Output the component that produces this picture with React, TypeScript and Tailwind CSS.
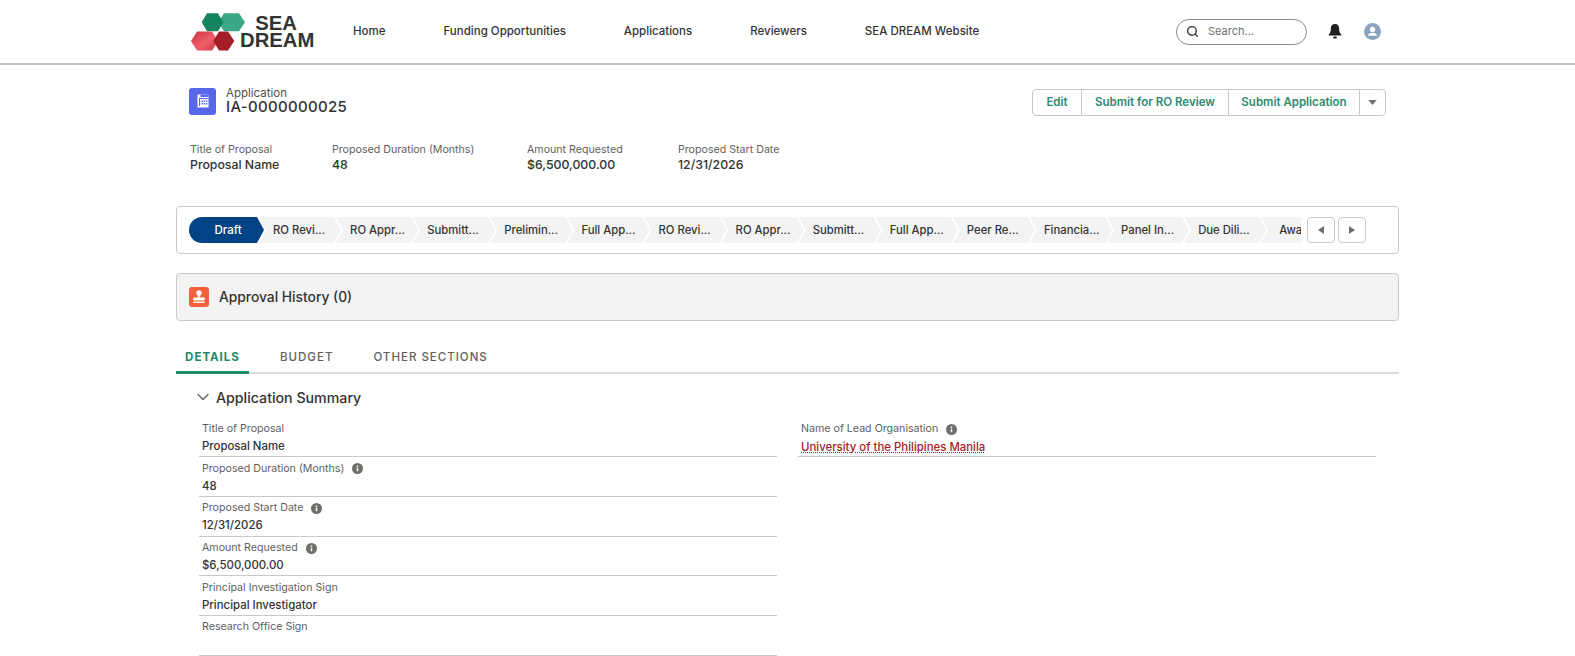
import React from 'react';
import { Search, ChevronDown } from 'lucide-react';

const navLinks = ['Home', 'Funding Opportunities', 'Applications', 'Reviewers', 'SEA DREAM Website'];

const highlights = [
  { label: 'Title of Proposal', value: 'Proposal Name', width: 'w-[142px]' },
  { label: 'Proposed Duration (Months)', value: '48', width: 'w-[195px]' },
  { label: 'Amount Requested', value: '$6,500,000.00', width: 'w-[151px]' },
  { label: 'Proposed Start Date', value: '12/31/2026', width: 'w-[150px]' },
];

const steps = [
  'RO Revi...',
  'RO Appr...',
  'Submitt...',
  'Prelimin...',
  'Full App...',
  'RO Revi...',
  'RO Appr...',
  'Submitt...',
  'Full App...',
  'Peer Re...',
  'Financia...',
  'Panel In...',
  'Due Dili...',
];

const summaryLeft = [
  { label: 'Title of Proposal', value: 'Proposal Name', info: false },
  { label: 'Proposed Duration (Months)', value: '48', info: true },
  { label: 'Proposed Start Date', value: '12/31/2026', info: true },
  { label: 'Amount Requested', value: '$6,500,000.00', info: true },
  { label: 'Principal Investigation Sign', value: 'Principal Investigator', info: false },
  { label: 'Research Office Sign', value: '', info: false },
];

const InfoDot = () => (
  <svg viewBox="0 0 12 12" className="ml-2 h-[11px] w-[11px] flex-none">
    <circle cx="6" cy="6" r="6" fill="#706e6b" />
    <rect x="5.2" y="5.2" width="1.6" height="3.8" fill="#fff" />
    <rect x="5.2" y="2.8" width="1.6" height="1.6" fill="#fff" />
  </svg>
);

const Logo = () => (
  <div className="relative h-[40px] w-[124px] flex-none">
    <svg viewBox="0 0 56 40" className="h-[40px] w-[56px]">
      <defs>
        <linearGradient id="redLeft" x1="0" y1="0" x2="1" y2="1">
          <stop offset="0" stopColor="#c9303c" />
          <stop offset="0.55" stopColor="#f0606a" />
          <stop offset="1" stopColor="#c8323c" />
        </linearGradient>
      </defs>
      <polygon points="34,1.2 49,1.2 55,10.2 49,19.200 34,19.200 28.300,10.200" fill="#3aa886" />
      <polygon points="17,1.200 28,1.200 33.300,10.200 28,19.200 17,19.200 11.700,10.200" fill="#14845f" />
      <polygon points="7,19.500 22,19.500 28.300,29 22,38.500 7,38.500 1,29" fill="url(#redLeft)" />
      <polygon points="29,19.500 38,19.500 44.300,29 38,38.500 29,38.500 23.300,29" fill="#a51d26" />
    </svg>
    <div className="absolute left-[50px] top-[3px] w-[74px] text-center font-['Liberation_Sans',sans-serif] text-[20.300px] font-bold leading-[17px] text-[#333333]">
      <div className="pr-[2px]">SEA</div>
      <div>DREAM</div>
    </div>
  </div>
);

const Header = () => (
  <header className="flex h-[65px] items-center border-b-2 border-[#c4c4c4] pl-[190px] pr-[194px]">
    <Logo />
    <nav className="ml-[39px] flex gap-[58px] text-[11.500px] font-medium text-[#333333]">
      {navLinks.map((link) => (
        <span key={link}>{link}</span>
      ))}
    </nav>
    <div className="ml-auto flex items-center">
      <div className="flex h-[26px] w-[131px] items-center rounded-full border border-[#8a8a8a] pl-[9px]">
        <Search size={13} strokeWidth={2.500} className="text-[#333333]" />
        <span className="ml-[9px] text-[11px] text-[#6f6f6f]">Search...</span>
      </div>
      <svg viewBox="2 1 12 14.500" className="ml-[21px] h-[15px] w-[14px]">
        <path d="M8 1c-2.600 0-4 2-4 4.500 0 3-.8 4.400-2 5.500v1h12v-1c-1.200-1.100-2-2.500-2-5.500C12 3 10.600 1 8 1z" fill="#1f1f1f" />
        <rect x="6.200" y="13" width="3.600" height="2" rx="1" fill="#1f1f1f" />
      </svg>
      <svg viewBox="0 0 16 16" className="ml-[22px] h-[17px] w-[17px]">
        <circle cx="8" cy="8" r="8" fill="#8aa3bf" />
        <circle cx="8" cy="6" r="2.500" fill="#fff" />
        <path d="M3.600 12c.4-1.900 2-2.800 4.400-2.800s4 .9 4.400 2.800z" fill="#fff" />
      </svg>
    </div>
  </header>
);

const RecordHeader = () => (
  <div className="flex items-start justify-between px-[13px] pt-[22px]">
    <div className="flex items-center">
      <div className="flex h-[27px] w-[27px] items-center justify-center rounded-[3px] bg-[#5867e8]">
        <svg viewBox="0 0 16 16" className="h-[16px] w-[16px]">
          <rect x="2.500" y="1.500" width="11" height="13" rx="0.500" fill="#fff" />
          <g fill="#5867e8">
            <rect x="5.500" y="1.500" width="8" height="2.500" />
            <rect x="4" y="5" width="9.500" height="1" />
            <rect x="4" y="5" width="1" height="8" />
            <rect x="6.500" y="7.500" width="1.500" height="1.500" />
            <rect x="8.700" y="7.500" width="1.500" height="1.500" />
            <rect x="10.900" y="7.500" width="1.500" height="1.500" />
            <rect x="6.500" y="10" width="1.500" height="1.500" />
            <rect x="8.700" y="10" width="1.500" height="1.500" />
            <rect x="10.900" y="10" width="1.500" height="1.500" />
          </g>
        </svg>
      </div>
      <div className="ml-[10px]">
        <div className="text-[11.500px] leading-[12px] text-[#4f4f4f]">Application</div>
        <div className="text-[15px] leading-[16px] font-medium tracking-[0.3px] text-[#333333]">IA-0000000025</div>
      </div>
    </div>
    <div className="mt-[2px] flex h-[27px] items-stretch rounded-[4px] border border-[#c9c9c9] text-[11.500px] font-semibold text-[#2e8b6f]">
      <span className="flex w-[48px] items-center justify-center">Edit</span>
      <span className="flex w-[147px] items-center justify-center border-l border-[#c9c9c9]">Submit for RO Review</span>
      <span className="flex w-[131px] items-center justify-center border-l border-[#c9c9c9]">Submit Application</span>
      <span className="flex w-[26px] items-center justify-center border-l border-[#c9c9c9]">
        <svg viewBox="0 0 10 6" className="h-[5px] w-[9px]">
          <polygon points="0,0 10,0 5,6" fill="#706e6b" />
        </svg>
      </span>
    </div>
  </div>
);

const Highlights = () => (
  <div className="mt-[27px] flex pl-[14px]">
    {highlights.map((item) => (
      <div key={item.label} className={item.width}>
        <div className="text-[10.650px] leading-[14px] text-[#5f5f5f]">{item.label}</div>
        <div className="text-[12.300px] leading-[16px] font-medium text-[#333333]">{item.value}</div>
      </div>
    ))}
  </div>
);

const PathBar = () => (
  <div className="mt-[33px] flex h-[48px] items-center rounded-[4px] border border-[#c9c9c9] pl-[12px]">
    <div className="flex w-[1112px] overflow-hidden">
      <div className="flex h-[26px] w-[75px] flex-none items-center justify-center rounded-l-full bg-[#014486] pl-[3px] pt-[1px] text-[11.500px] font-medium text-white [clip-path:polygon(0_0,calc(100%-7px)_0,100%_50%,calc(100%-7px)_100%,0_100%)]">
        Draft
      </div>
      {steps.map((step, i) => (
        <div
          key={i}
          className="-ml-[5px] flex h-[26px] w-[82.100px] flex-none items-center bg-[#f3f3f3] pl-[14px] pt-[1px] text-[11.300px] whitespace-nowrap font-medium text-[#333333] [clip-path:polygon(0_0,calc(100%-7px)_0,100%_50%,calc(100%-7px)_100%,0_100%,7px_50%)]"
        >
          {step}
        </div>
      ))}
      <div className="-ml-[5px] flex h-[26px] w-[82.100px] flex-none items-center bg-[#f3f3f3] pl-[18px] pt-[1px] text-[11.300px] whitespace-nowrap font-medium text-[#333333] [clip-path:polygon(0_0,calc(100%-7px)_0,100%_50%,calc(100%-7px)_100%,0_100%,7px_50%)]">
        Awaiting
      </div>
    </div>
    <button className="ml-[6px] flex h-[26px] w-[28px] items-center justify-center rounded-[4px] border border-[#c9c9c9]">
      <svg viewBox="0 0 6 8" className="h-[8px] w-[6px]">
        <polygon points="6,0 6,8 0,4" fill="#706e6b" />
      </svg>
    </button>
    <button className="ml-[3px] flex h-[26px] w-[28px] items-center justify-center rounded-[4px] border border-[#c9c9c9]">
      <svg viewBox="0 0 6 8" className="h-[8px] w-[6px]">
        <polygon points="0,0 6,4 0,8" fill="#706e6b" />
      </svg>
    </button>
  </div>
);

const ApprovalHistory = () => (
  <div className="mt-[19px] flex h-[48px] items-center rounded-[4px] border border-[#c9c9c9] bg-[#f3f3f3] pl-[12px]">
    <div className="flex h-[20px] w-[20px] items-center justify-center rounded-[3px] bg-[#f4603a]">
      <svg viewBox="0 0 14 14" className="h-[16px] w-[16px]">
        <circle cx="7" cy="3.500" r="2.300" fill="#fff" />
        <rect x="6" y="4" width="2" height="4" fill="#fff" />
        <rect x="2" y="7.500" width="10" height="2.500" rx="0.500" fill="#fff" />
        <rect x="2" y="11" width="10" height="1.200" fill="#fff" />
      </svg>
    </div>
    <span className="ml-[10px] text-[13.800px] font-medium text-[#333333]">Approval History (0)</span>
  </div>
);

const Tabs = () => (
  <div className="mt-[21px] flex h-[32px] border-b-2 border-[#dddbda] text-[11.500px] font-medium tracking-[1px] text-[#5f5f5f]">
    <div className="-mb-[2px] flex w-[73px] items-start justify-center border-b-[3px] border-[#1f8a68] pt-[7px] font-bold text-[#1f8a68]">
      DETAILS
    </div>
    <div className="ml-[31px] pt-[7px]">BUDGET</div>
    <div className="ml-[40px] pt-[7px]">OTHER SECTIONS</div>
  </div>
);

const Field = ({ label, value, info, link }: { label: string; value: string; info?: boolean; link?: boolean }) => (
  <div className="h-[39.700px] border-b border-[#c9c9c9] pl-[3px]">
    <div className="flex h-[23px] items-center text-[10.650px] text-[#5f5f5f]">
      {label}
      {info && <InfoDot />}
    </div>
    <div
      className={`h-[16px] text-[11.400px] leading-[16px] font-medium ${
        link ? '-mt-[1.500px] text-[#a61c28] underline decoration-dotted decoration-[#a61c28]' : '-mt-[2.500px] text-[#333333]'
      }`}
    >
      {value}
    </div>
  </div>
);

const Summary = () => (
  <section className="px-[23px]">
    <div className="flex h-[43.500px] items-center pt-[3px]">
      <ChevronDown size={20} strokeWidth={1.500} className="-ml-[6px] text-[#5f5f5f]" />
      <h2 className="ml-[3px] text-[14.200px] font-medium text-[#333333]">Application Summary</h2>
    </div>
    <div className="grid grid-cols-2 gap-x-[21px]">
      <div>
        {summaryLeft.map((field) => (
          <Field key={field.label} {...field} />
        ))}
      </div>
      <div>
        <Field label="Name of Lead Organisation" value="University of the Philipines Manila" info link />
      </div>
    </div>
  </section>
);

export default function App() {
  return (
    <div className="h-[656px] overflow-hidden bg-white font-['Inter',sans-serif]">
      <Header />
      <main className="ml-[176px] w-[1223px]">
        <RecordHeader />
        <Highlights />
        <PathBar />
        <ApprovalHistory />
        <Tabs />
        <Summary />
      </main>
    </div>
  );
}
